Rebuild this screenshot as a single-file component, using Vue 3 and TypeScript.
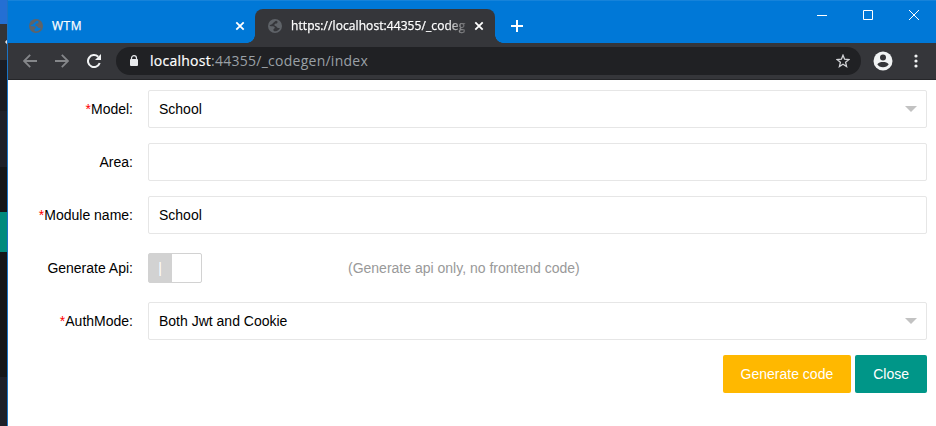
<script setup lang="ts">
import { ref } from 'vue'

interface Field {
  label: string
  required: boolean
  kind: 'select' | 'text' | 'switch'
  value: string
  hint?: string
}

const fields = ref<Field[]>([
  { label: 'Model', required: true, kind: 'select', value: 'School' },
  { label: 'Area', required: false, kind: 'text', value: '' },
  { label: 'Module name', required: true, kind: 'text', value: 'School' },
  { label: 'Generate Api', required: false, kind: 'switch', value: '', hint: '(Generate api only, no frontend code)' },
  { label: 'AuthMode', required: true, kind: 'select', value: 'Both Jwt and Cookie' },
])

const tabs = [
  { title: 'WTM', active: false },
  { title: 'https://localhost:44355/_codeg', active: true },
]
</script>

<template>
  <div class="desktop">
    <aside class="behind">
      <div class="behind-title"></div>
      <div class="behind-bar">
        <svg width="7" height="36" viewBox="0 0 7 36"><path d="M8 14.500L5 18l3 3.500z" fill="#e4e5e7" /></svg>
      </div>
      <div class="behind-menu"></div>
      <div class="behind-sub"></div>
      <div class="behind-selected"></div>
      <div class="behind-sub tall"></div>
      <div class="behind-rest"></div>
    </aside>

    <main class="window">
      <header class="titlebar">
        <div v-for="tab in tabs" :key="tab.title" class="tab" :class="{ active: tab.active }">
          <svg class="globe" width="14" height="14" viewBox="0 0 14 14">
            <circle cx="7" cy="7" r="7" class="disc" />
            <path class="land" d="M8.300 1.700C6.500 1.900 6.900 3 5.700 3.500 4.500 3.900 4.700 4.900 3.900 5.300 3 5.700 2.300 5.700 1.600 6.300 1.700 7.200 2.500 7.200 3.800 7.200 5.500 7.200 6.700 7.600 6.800 8.700 6.800 9.700 5.400 9.500 5.400 10.700 5.400 11.600 5.800 12.100 6.600 12.300 8.800 12.300 11 11.100 11.900 8.900 10.700 9.400 9.200 9 8.700 8 8.200 6.900 6.500 7.300 6.400 6.100 6.300 5 7.400 4.700 8.300 4.600 9.300 4.500 9.200 3.600 9.700 2.900 9.400 2.300 9 1.900 8.300 1.700Z" />
          </svg>
          <span class="tab-title">{{ tab.title }}</span>
          <svg class="tab-close" width="10" height="10" viewBox="0 0 10 10"><path d="M1.300 1.300l7.400 7.400M8.700 1.300L1.300 8.700" /></svg>
        </div>
        <svg class="new-tab" width="12" height="12" viewBox="0 0 12 12"><path d="M6 0v12M0 6h12" /></svg>
        <div class="controls">
          <svg width="12" height="12" viewBox="0 0 12 12"><path d="M1 6.500h10" /></svg>
          <svg width="12" height="12" viewBox="0 0 12 12"><path d="M1.500 1.500h9v9h-9z" /></svg>
          <svg width="12" height="12" viewBox="0 0 12 12"><path d="M1 1l10 10M11 1L1 11" /></svg>
        </div>
      </header>

      <nav class="toolbar">
        <svg class="back" width="14" height="14" viewBox="0 0 14 14"><path d="M14 7H1.500M7.200.800L1 7l6.200 6.200" /></svg>
        <svg class="forward" width="14" height="14" viewBox="0 0 14 14"><path d="M0 7h12.500M6.800.800L13 7l-6.200 6.200" /></svg>
        <svg class="reload" width="14" height="14" viewBox="0 0 14 14">
          <path d="M12.700 9A6 6 0 1 1 11.200 2.800" fill="none" stroke="#f1f3f4" stroke-width="2" />
          <path d="M14 0v6H8z" fill="#f1f3f4" />
        </svg>
        <div class="address">
          <svg width="10" height="12" viewBox="0 0 10 12">
            <path d="M2.500 5V3.200a2.500 2.500 0 0 1 5 0V5" fill="none" stroke="#e8eaed" stroke-width="1.200" />
            <rect x="1" y="4" width="8" height="7" rx="1" fill="#e8eaed" />
          </svg>
          <span class="url"><b>localhost</b>:44355/_codegen/index</span>
          <svg class="star" width="14" height="14" viewBox="0 0 14 14"><path d="M7 1.200l1.600 4 4.300.300-3.300 2.800 1 4.200L7 10.200l-3.600 2.300 1-4.200L1.100 5.500l4.300-.300z" /></svg>
        </div>
        <svg class="avatar" width="20" height="20" viewBox="0 0 20 20">
          <circle cx="10" cy="10" r="9.500" fill="#f1f3f4" />
          <circle cx="10" cy="6.500" r="3" fill="#35363a" />
          <path d="M4.300 13.300c1-1.700 3.500-2.300 5.700-2.300s4.700.600 5.700 2.300C14.600 15 12.600 16.300 10 16.300S5.400 15 4.300 13.300z" fill="#35363a" />
        </svg>
        <svg class="more" width="4" height="14" viewBox="0 0 4 14" fill="#f1f3f4">
          <circle cx="2" cy="2" r="1.600" /><circle cx="2" cy="7" r="1.600" /><circle cx="2" cy="12" r="1.600" />
        </svg>
      </nav>

      <form class="form" @submit.prevent>
        <div v-for="field in fields" :key="field.label" class="row">
          <label class="label"><i v-if="field.required">*</i>{{ field.label }}:</label>
          <div v-if="field.kind === 'switch'" class="switch-line">
            <div class="switch"><span class="knob">|</span></div>
            <span class="hint">{{ field.hint }}</span>
          </div>
          <div v-else class="control">
            <span>{{ field.value }}</span>
            <span v-if="field.kind === 'select'" class="caret"></span>
          </div>
        </div>
        <div class="actions">
          <button class="btn generate">Generate code</button>
          <button class="btn close">Close</button>
        </div>
      </form>
    </main>
  </div>
</template>

<style>
body {
  margin: 0;
  overflow: hidden;
}
</style>

<style scoped>
.desktop {
  display: flex;
  width: 936px;
  height: 426px;
  font-family: "Liberation Sans", Arial, sans-serif;
  font-size: 14px;
  color: #000;
  background: #fff;
}
svg {
  display: block;
  flex: none;
}
.behind {
  width: 7px;
  flex: none;
  background: #1e2029;
}
.behind-title {
  height: 24px;
  background: #246fd3;
}
.behind-bar {
  height: 36px;
  background: #333437;
}
.behind-menu {
  height: 107px;
  background: linear-gradient(#1a1c23 50px, #191a20 50px, #191a20 51px, #1e2029 51px);
}
.behind-sub {
  height: 45px;
  background: #151619;
}
.behind-selected {
  height: 40px;
  background: #008a7d;
}
.behind-sub.tall {
  height: 125px;
}
.window {
  flex: 1;
  box-sizing: border-box;
  min-width: 0;
  border-left: 1px solid #1b74c5;
}
.titlebar {
  display: flex;
  align-items: flex-end;
  height: 43px;
  box-sizing: border-box;
  background: #0078d7;
  border-top: 1px solid #1683da;
}
.tab {
  display: flex;
  align-items: center;
  box-sizing: border-box;
  width: 247px;
  height: 34px;
  padding: 0 10px 0 21px;
  color: #fff;
}
.tab.active {
  position: relative;
  width: 240px;
  padding: 0 11px 0 13px;
  background: #35363a;
  border-radius: 8px 8px 0 0;
}
.tab.active::before,
.tab.active::after {
  content: "";
  position: absolute;
  bottom: 0;
  width: 8px;
  height: 8px;
}
.tab.active::before {
  left: -8px;
  background: radial-gradient(circle at 0 0, transparent 7.500px, #35363a 8px);
}
.tab.active::after {
  right: -8px;
  background: radial-gradient(circle at 100% 0, transparent 7.500px, #35363a 8px);
}
.disc {
  fill: #5f6368;
}
.land {
  fill: #0078d7;
}
.active .land {
  fill: #35363a;
}
.tab-title {
  flex: 1;
  min-width: 0;
  margin: 0 7px 0 9px;
  white-space: nowrap;
  font: 12px/18px "Open Sans", sans-serif;
  letter-spacing: 0.5px;
  -webkit-text-stroke: 0.250px currentColor;
}
.active .tab-title {
  letter-spacing: 0.080px;
  mask-image: linear-gradient(90deg, #000 155px, transparent 180px);
}
.tab-close {
  stroke: #fff;
  stroke-width: 1.800;
}
.new-tab {
  margin: 0 0 11px 16px;
  stroke: #fff;
  stroke-width: 2;
}
.controls {
  display: flex;
  gap: 34px;
  margin: 0 16px 22px auto;
}
.controls svg {
  fill: none;
  stroke: #fff;
  stroke-width: 1;
}
.toolbar {
  display: flex;
  align-items: center;
  height: 37px;
  box-sizing: border-box;
  padding: 0 18px 0 15px;
  background: #35363a;
  border-bottom: 1px solid #252629;
}
.back,
.forward {
  fill: none;
  stroke: #85878a;
  stroke-width: 1.800;
}
.forward {
  margin-left: 18px;
}
.reload {
  margin-left: 18px;
}
.address {
  flex: 1;
  display: flex;
  align-items: center;
  height: 28px;
  box-sizing: border-box;
  margin-left: 15px;
  padding: 0 11px 0 13px;
  border-radius: 14px;
  background: #202124;
}
.url {
  margin-left: 11px;
  font: 14px/20px "Open Sans", sans-serif;
  letter-spacing: 0.260px;
  color: #9aa0a6;
}
.url b {
  font-weight: 400;
  color: #fff;
  -webkit-text-stroke: 0.200px currentColor;
}
.star {
  margin-left: auto;
  fill: none;
  stroke: #d2d3d6;
  stroke-width: 1.300;
}
.avatar {
  margin-left: 12px;
}
.more {
  margin-left: 21px;
}
.form {
  display: flex;
  flex-direction: column;
  gap: 15px;
  padding: 10px 9px 0 0;
}
.row {
  display: flex;
  height: 38px;
}
.label {
  width: 125px;
  margin-right: 15px;
  line-height: 38px;
  text-align: right;
}
.label i {
  font-style: normal;
  color: #f00;
}
.control {
  flex: 1;
  display: flex;
  align-items: center;
  justify-content: space-between;
  box-sizing: border-box;
  padding: 0 9px 0 10px;
  border: 1px solid #e6e6e6;
  border-radius: 2px;
}
.caret {
  border: 6px solid transparent;
  border-top-color: #c2c2c2;
  border-bottom: 0;
}
.switch-line {
  display: flex;
  align-items: center;
}
.switch {
  box-sizing: border-box;
  width: 54px;
  height: 30px;
  border: 1px solid #d2d2d2;
  border-radius: 2px;
}
.knob {
  display: block;
  box-sizing: border-box;
  width: 23px;
  height: 28px;
  padding-right: 1px;
  line-height: 28px;
  text-align: center;
  color: #fff;
  background: #d2d2d2;
}
.hint {
  margin-left: 146px;
  color: #999;
}
.actions {
  display: flex;
  justify-content: flex-end;
  gap: 4px;
}
.btn {
  height: 38px;
  padding: 0 18px;
  border: 0;
  border-radius: 2px;
  font: inherit;
  color: #fff;
}
.generate {
  background: #ffb800;
}
.close {
  background: #009688;
}
</style>
